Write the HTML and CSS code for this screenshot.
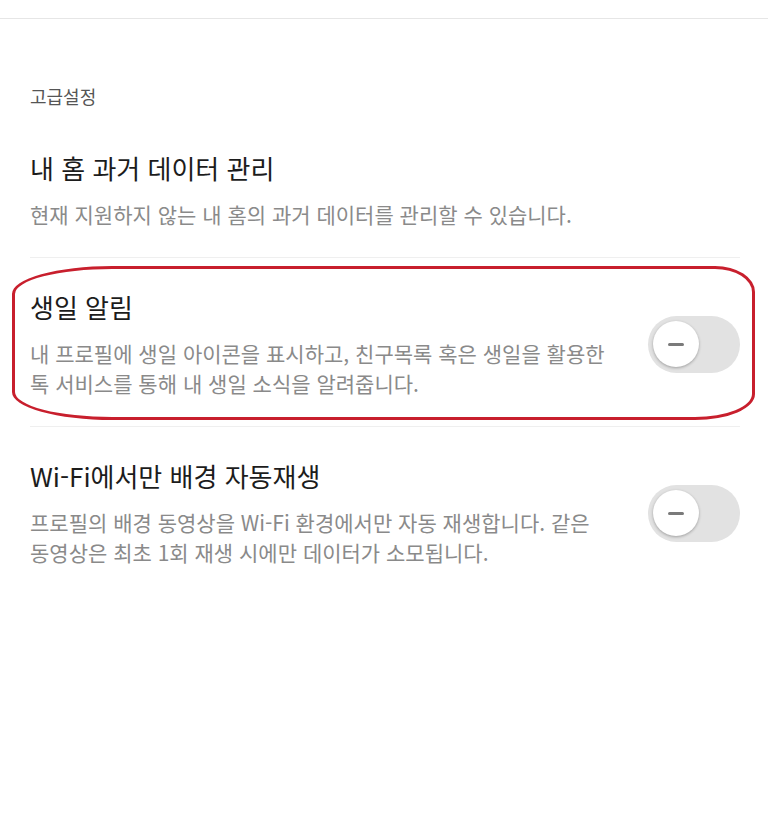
FILE: index.html
```html
<!DOCTYPE html>
<html lang="ko">
<head>
    <meta charset="UTF-8">
    <meta name="viewport" content="width=device-width, initial-scale=1.0">
    <title>고급설정</title>
    <link rel="stylesheet" href="styles.css">
</head>
<body>

<div class="topbar"></div>

<!-- 고급설정 섹션 -->
<div class="section">
    <p class="section-label">고급설정</p>

    <div class="setting">
        <div class="setting-text">
            <p class="setting-title">내 홈 과거 데이터 관리</p>
            <p class="setting-desc">현재 지원하지 않는 내 홈의 과거 데이터를 관리할 수 있습니다.</p>
        </div>
    </div>

    <div class="setting highlighted">
        <div class="setting-text">
            <p class="setting-title">생일 알림</p>
            <p class="setting-desc">내 프로필에 생일 아이콘을 표시하고, 친구목록 혹은 생일을 활용한 톡 서비스를 통해 내 생일 소식을 알려줍니다.</p>
        </div>
        <div class="toggle"><span class="knob"><span class="dash"></span></span></div>
        <!-- 빨간 동그라미 표시 -->
        <div class="mark"></div>
    </div>

    <div class="setting last">
        <div class="setting-text">
            <p class="setting-title">Wi-Fi에서만 배경 자동재생</p>
            <p class="setting-desc">프로필의 배경 동영상을 Wi-Fi 환경에서만 자동 재생합니다. 같은 동영상은 최초 1회 재생 시에만 데이터가 소모됩니다.</p>
        </div>
        <div class="toggle"><span class="knob"><span class="dash"></span></span></div>
    </div>
</div>

</body>
</html>
```

FILE: styles.css
```css
body {
    margin: 0;
    background: #fff;
    font-family: "Noto Sans CJK KR", "Noto Sans", sans-serif;
}

p {
    margin: 0;
}

.topbar {
    height: 18px;
    border-bottom: 1px solid #e6e6e6;
}

.section {
    padding: 65px 28px 0 30px;
}

.section-label {
    font-size: 18px;
    line-height: 24px;
    color: #555;
    margin-bottom: 11px;
}

.setting {
    position: relative;
    display: flex;
    align-items: center;
    gap: 20px;
    padding: 32px 0 28px;
    border-bottom: 1px solid #efefef;
}

.setting.last {
    border-bottom: none;
}

.setting-text {
    width: 590px;
    word-break: keep-all;
}

.setting-title {
    font-size: 26px;
    line-height: 34px;
    color: #1c1c1c;
    margin-bottom: 14px;
}

.setting-desc {
    font-size: 21px;
    line-height: 30px;
    color: #8a8a8a;
}

/* 토글 스위치 */
.toggle {
    margin-left: auto;
    width: 92px;
    height: 57px;
    border-radius: 29px;
    background: #e2e2e2;
    display: flex;
    align-items: center;
    padding: 0 5px;
    box-sizing: border-box;
    flex-shrink: 0;
}

.knob {
    width: 46px;
    height: 46px;
    border-radius: 50%;
    background: #fff;
    box-shadow: 0 1px 3px rgba(0, 0, 0, 0.3);
    display: flex;
    align-items: center;
    justify-content: center;
}

.dash {
    width: 16px;
    height: 3px;
    border-radius: 2px;
    background: #7a7a7a;
}

/* 강조 표시 */
.mark {
    position: absolute;
    left: -18px;
    right: -15px;
    top: 8px;
    bottom: 6px;
    border: 3px solid #c81f2d;
    border-radius: 100px 40px 60px 100px / 28px 26px 26px 28px;
    pointer-events: none;
}
```
